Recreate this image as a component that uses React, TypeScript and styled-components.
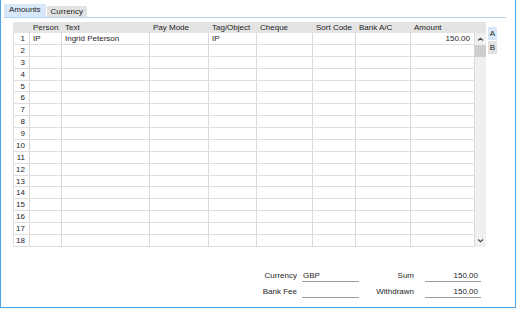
import React from 'react';
import styled, { createGlobalStyle } from 'styled-components';

const GlobalStyle = createGlobalStyle`
  body {
    margin: 0;
    background: #ffffff;
    font-family: "Liberation Sans", Arial, sans-serif;
    font-size: 8px;
    color: #1e1e1e;
  }
`;

const Frame = styled.div`
  width: 516px;
  height: 308px;
  box-sizing: border-box;
  border: 1px solid #4ea3e8;
  border-top: none;
  padding-left: 3px;
  display: flex;
  flex-direction: column;
`;

const TabBar = styled.div`
  display: flex;
  align-items: flex-end;
  height: 17px;
`;

const Tab = styled.div<{ $active?: boolean }>`
  height: ${(p) => (p.$active ? '13px' : '11px')};
  line-height: ${(p) => (p.$active ? '12px' : '11px')};
  padding: 0 ${(p) => (p.$active ? '5px' : '4px')};
  background: ${(p) => (p.$active ? '#d8e8f8' : '#e2e2e2')};
  border-right: 1px solid #ffffff;
`;

const Panel = styled.div`
  flex: 1;
  margin-right: 9px;
  border-top: 1px solid #b3d2ef;
  padding: 4px 0 0 9px;
  display: flex;
  flex-direction: column;
`;

const GridArea = styled.div`
  display: flex;
  align-items: flex-start;
  gap: 2px;
`;

const Grid = styled.div`
  display: flex;
  flex-direction: column;
`;

const HeaderRow = styled.div`
  display: flex;
  height: 11px;
  line-height: 11px;
  background: #e4e4e4;
`;

const Body = styled.div`
  display: flex;
`;

const Rows = styled.div`
  display: flex;
  flex-direction: column;
`;

const Row = styled.div`
  display: flex;
  height: 11.88px;
  box-sizing: border-box;
  border-bottom: 1px solid #dedede;
  line-height: 11px;
`;

const Cell = styled.div<{ $w: number; $right?: boolean; $num?: boolean }>`
  width: ${(p) => p.$w}px;
  box-sizing: border-box;
  padding: ${(p) => (p.$num ? '0 4px 0 0' : p.$right ? '0 4px 0 0' : '0 0 0 3px')};
  text-align: ${(p) => (p.$right || p.$num ? 'right' : 'left')};
  white-space: nowrap;
  overflow: hidden;
`;

const BodyCell = styled(Cell)`
  border-right: 1px solid #d9d9d9;
  &:first-child {
    border-left: 1px solid #e0e0e0;
  }
`;

const ScrollSpacer = styled.div`
  width: 11px;
`;

const ScrollBar = styled.div`
  width: 11px;
  height: 213.8px;
  background: #f0f0f0;
  display: flex;
  flex-direction: column;
  align-items: center;
`;

const Arrow = styled.div`
  height: 12px;
  display: flex;
  align-items: center;
  justify-content: center;
`;

const Thumb = styled.div`
  width: 11px;
  height: 12px;
  background: #cdcdcd;
`;

const Track = styled.div`
  flex: 1;
`;

const SideTabs = styled.div`
  display: flex;
  flex-direction: column;
  margin-top: 5px;
`;

const SideTab = styled.div<{ $active?: boolean }>`
  width: 9px;
  height: 13px;
  line-height: 13px;
  text-align: center;
  background: ${(p) => (p.$active ? '#d8e8f8' : '#e2e2e2')};
  border-bottom: 1px solid #ffffff;
`;

const Footer = styled.div`
  display: flex;
  justify-content: flex-end;
  gap: 15px;
  margin-top: 22px;
  padding-right: 25px;
`;

const FieldGroup = styled.div<{ $label: number; $field: number; $gap: number }>`
  display: grid;
  grid-template-columns: ${(p) => p.$label}px ${(p) => p.$field}px;
  column-gap: ${(p) => p.$gap}px;
  row-gap: 3px;
`;

const Label = styled.div`
  text-align: right;
  height: 13px;
  line-height: 13px;
  white-space: nowrap;
`;

const Field = styled.div<{ $right?: boolean }>`
  height: 13px;
  line-height: 13px;
  box-sizing: border-box;
  border-bottom: 1px solid #9c9c9c;
  padding: ${(p) => (p.$right ? '0 3px 0 0' : '0 0 0 1px')};
  text-align: ${(p) => (p.$right ? 'right' : 'left')};
`;

const columns = [
  { key: 'n', title: '', w: 17 },
  { key: 'person', title: 'Person', w: 32 },
  { key: 'text', title: 'Text', w: 88 },
  { key: 'pay', title: 'Pay Mode', w: 59 },
  { key: 'tag', title: 'Tag/Object', w: 48 },
  { key: 'cheque', title: 'Cheque', w: 56 },
  { key: 'sort', title: 'Sort Code', w: 43 },
  { key: 'bank', title: 'Bank A/C', w: 55 },
  { key: 'amount', title: 'Amount', w: 64 },
];

const data: Record<string, string>[] = [
  { person: 'IP', text: 'Ingrid Peterson', tag: 'IP', amount: '150.00' },
];

const Chevron: React.FC<{ down?: boolean }> = ({ down }) => (
  <svg width="7" height="5" viewBox="0 0 7 5">
    <polyline
      points={down ? '1,1.5 3.5,3.8 6,1.5' : '1,3.5 3.5,1.2 6,3.5'}
      fill="none"
      stroke="#505050"
      strokeWidth="1.2"
    />
  </svg>
);

const App: React.FC = () => {
  const rows = Array.from({ length: 18 }, (_, i) => data[i] || {});

  return (
    <Frame>
      <GlobalStyle />
      <TabBar>
        <Tab $active>Amounts</Tab>
        <Tab>Currency</Tab>
      </TabBar>
      <Panel>
        <GridArea>
          <Grid>
            <HeaderRow>
              {columns.map((c) => (
                <Cell key={c.key} $w={c.w}>
                  {c.title}
                </Cell>
              ))}
              <ScrollSpacer />
            </HeaderRow>
            <Body>
              <Rows>
                {rows.map((r, i) => (
                  <Row key={i}>
                    {columns.map((c) => (
                      <BodyCell
                        key={c.key}
                        $w={c.w}
                        $num={c.key === 'n'}
                        $right={c.key === 'amount'}
                      >
                        {c.key === 'n' ? i + 1 : r[c.key] || ''}
                      </BodyCell>
                    ))}
                  </Row>
                ))}
              </Rows>
              <ScrollBar>
                <Arrow>
                  <Chevron />
                </Arrow>
                <Thumb />
                <Track />
                <Arrow>
                  <Chevron down />
                </Arrow>
              </ScrollBar>
            </Body>
          </Grid>
          <SideTabs>
            <SideTab $active>A</SideTab>
            <SideTab>B</SideTab>
          </SideTabs>
        </GridArea>
        <Footer>
          <FieldGroup $label={35} $field={57} $gap={5}>
            <Label>Currency</Label>
            <Field>GBP</Field>
            <Label>Bank Fee</Label>
            <Field />
          </FieldGroup>
          <FieldGroup $label={40} $field={56} $gap={11}>
            <Label>Sum</Label>
            <Field $right>150.00</Field>
            <Label>Withdrawn</Label>
            <Field $right>150.00</Field>
          </FieldGroup>
        </Footer>
      </Panel>
    </Frame>
  );
};

export default App;
